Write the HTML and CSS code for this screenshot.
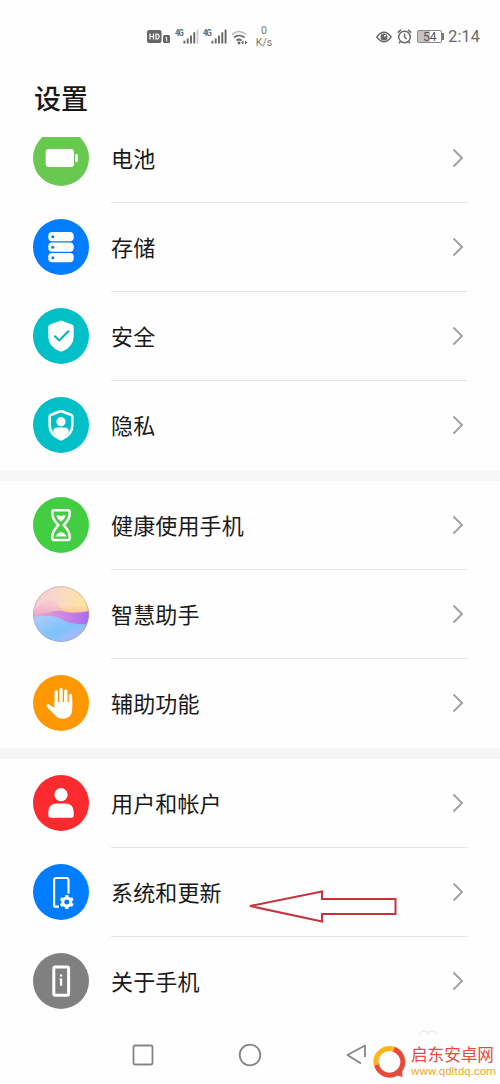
FILE: index.html
```html
<!DOCTYPE html>
<html lang="zh-CN">
<head>
<meta charset="utf-8">
<title>设置</title>
<link rel="stylesheet" href="styles.css">
</head>
<body>
<div class="phone">
  <header class="status">
    <div class="status-left">
      <svg width="24" height="16" viewBox="0 0 24 16"><rect x="0" y="1" width="14.500" height="13" rx="2" fill="#666"/><path d="M3 4.500v6M6.500 4.500v6M3 7.500h3.500M9 5v5h1q2 0 2-2.500t-2-2.500z" stroke="#fff" stroke-width="1.200" fill="none"/><rect x="16" y="6" width="7" height="8" rx="1.500" fill="#666"/><path d="M18.500 8.500h1.200v4" stroke="#fff" fill="none"/></svg>
      <span class="signal"><span class="net">4G</span><svg width="16" height="15" viewBox="0 0 17 15"><path d="M1.500 15v-3M5 15V9.500M8.500 15V6.500M12 15V3" stroke="#666" stroke-width="2"/><path d="M15.500 15V0" stroke="#ccc" stroke-width="2"/></svg></span>
      <span class="signal"><span class="net">4G</span><svg width="16" height="15" viewBox="0 0 17 15"><path d="M1.500 15v-3M5 15V9.500M8.500 15V6.500M12 15V3M15.500 15V0" stroke="#666" stroke-width="2"/></svg></span>
      <svg class="wifi" width="17" height="15" viewBox="0 0 17 15"><path d="M1 4.500Q8 -1.500 15 4.500" stroke="#bbb" stroke-width="1.600" fill="none"/><path d="M3 7.500q5-4 10.500 0M5.500 10.500q2.500-2 5 0" stroke="#666" stroke-width="1.700" fill="none"/><circle cx="8" cy="13" r="1.400" fill="#666"/><path d="M10 12.500l2.500-2v4zM16.500 12.500l-2.500-2v4z" fill="#666"/></svg>
      <span class="speed"><span>0</span><span>K/s</span></span>
    </div>
    <div class="status-right">
      <svg width="16" height="12" viewBox="0 0 16 12"><path d="M.8 6Q8-3.500 15.200 6 8 15.500.8 6z" fill="none" stroke="#666" stroke-width="1.300"/><circle cx="8" cy="6" r="3.500" fill="#666"/><circle cx="9" cy="4.800" r="1" fill="#fff"/></svg>
      <svg width="15" height="15" viewBox="0 0 15 15" fill="none" stroke="#666" stroke-width="1.400"><circle cx="7.500" cy="8" r="5.800"/><path d="M.8 3.600L4 .9M14.200 3.600L11 .9M7.500 4.500V8l2.200 2M3.500 12.500L2 14.300M11.500 12.500l1.500 1.800"/></svg>
      <span class="charge"><span class="charge-text">54</span></span>
      <span class="time">2:14</span>
    </div>
  </header>
  <h1 class="title">设置</h1>
  <main class="list">
    <section class="group group-first">
      <div class="row"><span class="icon green"><svg viewBox="0 0 56 56" fill="#fff"><rect x="12.700" y="19" width="28.300" height="18" rx="3"/><rect x="42.200" y="24" width="2.600" height="8" rx="1"/></svg></span><div class="cell"><span class="label">电池</span><svg class="chev" viewBox="0 0 12 20"><path d="M1.500 1.500L10 10l-8.500 8.500"/></svg></div></div>
      <div class="row"><span class="icon blue"><svg viewBox="0 0 56 56"><g fill="#fff"><rect x="15.300" y="13" width="25.400" height="9.300" rx="3.800"/><rect x="15.300" y="23.500" width="25.400" height="9.300" rx="3.800"/><rect x="15.300" y="34" width="25.400" height="9.300" rx="3.800"/></g><g fill="#007dff"><circle cx="19.800" cy="17.700" r="1.500"/><circle cx="19.800" cy="28.200" r="1.500"/><circle cx="19.800" cy="38.700" r="1.500"/></g></svg></span><div class="cell"><span class="label">存储</span><svg class="chev" viewBox="0 0 12 20"><path d="M1.500 1.500L10 10l-8.500 8.500"/></svg></div></div>
      <div class="row"><span class="icon teal"><svg viewBox="0 0 56 56"><path d="M26.500 13q1.500-.8 3 0L39 16.500q1.700.7 1.700 2.500V28.500q0 10-11.200 14.700-1.500.6-3 0Q15.200 38.500 15.200 28.500V19q0-1.800 1.700-2.500z" fill="#fff"/><path d="M21.300 27.700l5 4.700 9.500-9.600" fill="none" stroke="#00b4bc" stroke-width="2"/></svg></span><div class="cell"><span class="label">安全</span><svg class="chev" viewBox="0 0 12 20"><path d="M1.500 1.500L10 10l-8.500 8.500"/></svg></div></div>
      <div class="row"><span class="icon teal"><svg viewBox="0 0 56 56"><path d="M27.200 14.300q.8-.4 1.600 0L38.300 18q1 .4 1 1.600V28.500q0 9-10.300 13.500-1 .4-2 0Q16.700 37.500 16.700 28.500V19.600q0-1.200 1-1.600z" fill="none" stroke="#fff" stroke-width="2.600"/><circle cx="28" cy="24.700" r="4.600" fill="#fff"/><path d="M20.300 35.500V34.500q0-4 4-4h7.400q4 0 4 4v1q-2.500 3-7.700 6-5.200-3-7.700-6z" fill="#fff"/></svg></span><div class="cell"><span class="label">隐私</span><svg class="chev" viewBox="0 0 12 20"><path d="M1.500 1.500L10 10l-8.500 8.500"/></svg></div></div>
    </section>
    <section class="group">
      <div class="row"><span class="icon lime"><svg viewBox="0 0 56 56"><path d="M21.500 13.300h13q2.200 0 2.200 2v1.500q0 5-6 11.400 6 6.500 6 11.500v1.500q0 1.900-2.200 1.900h-13q-2.200 0-2.200-1.900v-1.500q0-5 6-11.500-6-6.400-6-11.400v-1.500q0-2 2.200-2z" fill="none" stroke="#fff" stroke-width="2.500"/><path d="M23.200 18.700q2.400-1 4.800.6 2.400-1.600 4.800-.6-.9 3-4.800 5.700-3.900-2.700-4.800-5.700zM22.300 39.500Q24.500 35.500 28 35.300q3.500.2 5.700 4.200z" fill="#fff"/></svg></span><div class="cell"><span class="label">健康使用手机</span><svg class="chev" viewBox="0 0 12 20"><path d="M1.500 1.500L10 10l-8.500 8.500"/></svg></div></div>
      <div class="row"><span class="icon"><svg viewBox="0 0 56 56"><defs><linearGradient id="sky" x1="0" y1="0" x2="1" y2="0"><stop offset="0" stop-color="#f6cbd8"/><stop offset=".5" stop-color="#f9d9c4"/><stop offset="1" stop-color="#ffe69c"/></linearGradient><linearGradient id="peach" x1="0" y1="0" x2="0" y2="1"><stop offset="0" stop-color="#ffeaa7"/><stop offset="1" stop-color="#f9b393"/></linearGradient><linearGradient id="violet"><stop offset="0" stop-color="#f0a8be"/><stop offset=".5" stop-color="#d18ae2"/><stop offset="1" stop-color="#a66cf0"/></linearGradient><linearGradient id="sea" x1="0" y1="0" x2="1" y2="1"><stop offset="0" stop-color="#b4cbf8"/><stop offset=".5" stop-color="#7fc3fc"/><stop offset="1" stop-color="#a4bbfb"/></linearGradient><linearGradient id="blush" x1="0" y1="0" x2="0" y2="1"><stop offset="0" stop-color="#f3b9cf" stop-opacity=".3"/><stop offset="1" stop-color="#ec9fc2"/></linearGradient></defs><g><path fill="url(#sky)" d="M0 0h56v56H0z"/><path d="M0 26Q10 12 20 15q8 5 14 10v8H0z" fill="url(#blush)"/><path d="M23 18q9 6 18 1 9-4 15 2v10H38Q32 25 23 18z" fill="url(#peach)"/><path d="M0 28q9 0 15-1 9-4 18-1 10 2 23-1v19q-16 0-24-4-12-7-32-5z" fill="url(#violet)"/><path d="M0 31q8-2 16-1 9 0 16 5 8 4 24 3v18H0z" fill="url(#sea)"/><path d="M27 56q4-14 29-17v17z" fill="#b6b5f8" opacity=".35"/></g><circle cx="28" cy="28" r="27.500" fill="none" stroke="#9c9baf" stroke-opacity=".65" stroke-width=".8"/></svg></span><div class="cell"><span class="label">智慧助手</span><svg class="chev" viewBox="0 0 12 20"><path d="M1.500 1.500L10 10l-8.500 8.500"/></svg></div></div>
      <div class="row"><span class="icon orange"><svg viewBox="0 0 56 56"><g stroke="#fff" stroke-width="3.400" stroke-linecap="round" fill="none"><path d="M23.200 31V17M28 31V14.500M32.800 31V16M37.500 31V20.500M22.500 37L15.200 30.800"/></g><path d="M21.500 27h17.700v7q0 9.700-9.200 9.700-5.500 0-8.500-4L15 33l2.500-2.500 4 2.500z" fill="#fff"/></svg></span><div class="cell"><span class="label">辅助功能</span><svg class="chev" viewBox="0 0 12 20"><path d="M1.500 1.500L10 10l-8.500 8.500"/></svg></div></div>
    </section>
    <section class="group">
      <div class="row"><span class="icon red"><svg viewBox="0 0 56 56" fill="#fff"><circle cx="28" cy="19.700" r="6.600"/><path d="M15.300 37q0-8.500 8.500-8.500h8.400q8.500 0 8.500 8.500v3.200q0 2.500-2.500 2.500H17.800q-2.500 0-2.500-2.500z"/></svg></span><div class="cell"><span class="label">用户和帐户</span><svg class="chev" viewBox="0 0 12 20"><path d="M1.500 1.500L10 10l-8.500 8.500"/></svg></div></div>
      <div class="row"><span class="icon blue"><svg viewBox="0 0 56 56" fill="none" stroke="#fff"><path d="M26 42.700h-3.500q-1.400 0-1.400-1.500V16q0-2 2-2h10.400q2 0 2 2v13.500" stroke-width="2.200"/><circle cx="33.800" cy="38" r="4" stroke-width="3"/><path d="M33.800 31v3M33.800 42v3M27.700 34.500l2.600 1.500M37.300 40l2.600 1.500M27.700 41.500l2.600-1.500M37.300 36l2.600-1.500" stroke-width="3.200"/></svg></span><div class="cell"><span class="label">系统和更新</span><svg class="chev" viewBox="0 0 12 20"><path d="M1.500 1.500L10 10l-8.500 8.500"/></svg><svg class="arrow" viewBox="0 0 152 36"><path d="M3 17L75 2.500V10h73.500v15H75v7.500z"/></svg></div></div>
      <div class="row"><span class="icon gray"><svg viewBox="0 0 56 56"><rect x="20.800" y="14" width="14.800" height="28.300" rx="1.500" fill="none" stroke="#fff" stroke-width="3"/><path d="M27 21.500h2.200v2H27zM26.500 25.500h2.700v7.300H27v-5.700h-.5z" fill="#fff"/></svg></span><div class="cell"><span class="label">关于手机</span><svg class="chev" viewBox="0 0 12 20"><path d="M1.500 1.500L10 10l-8.500 8.500"/></svg></div></div>
    </section>
  </main>
  <nav class="nav">
    <svg width="22" height="22" viewBox="0 0 22 22"><rect x="1.500" y="1.500" width="19" height="19" rx="1.500"/></svg>
    <svg width="24" height="24" viewBox="0 0 24 24"><circle cx="12" cy="12" r="10.300"/></svg>
    <svg width="22" height="24" viewBox="0 0 22 24"><path d="M16 20.500L2.500 12 20 2.500V14"/></svg>
  </nav>
  <div class="brand">
    <svg class="ghost" width="18" height="8" viewBox="0 0 18 8"><path d="M1 6q0-4 4-4t4 4q0-4 4-4t4 4" fill="none" stroke="#ececec" stroke-width="1.300"/></svg>
    <svg width="33" height="34" viewBox="0 0 33 34"><g fill="none" stroke-width="5"><path d="M20 4A13.300 13.300 0 1 1 3.300 18" stroke="#e84a3a"/><path d="M3.400 20A13.300 13.300 0 0 1 21 4.400" stroke="#fcb51b"/></g><path d="M21 29.500l8-6 .5 8.500z" fill="#e84a3a"/></svg>
    <div class="brand-text"><span class="brand-name">启东安卓网</span><span class="brand-url">www.qdltdq.com</span></div>
  </div>
</div>
</body>
</html>
```
FILE: styles.css
```css
* { box-sizing: border-box; }
body { margin: 0; background: #fefefe; color: #191919; font-family: "Noto Sans CJK SC", sans-serif; }
svg { display: block; flex: none; }
.phone { position: relative; width: 500px; height: 1084px; overflow: hidden; display: flex; flex-direction: column; }
.status { height: 73px; padding: 0 20px 0 147px; display: flex; align-items: center; justify-content: space-between; color: #666; font-family: Roboto, sans-serif; }
.status-left { display: flex; align-items: center; gap: 4px; }
.signal { display: flex; align-items: center; gap: 0; }
.net { font-size: 9px; font-weight: 700; line-height: 9px; width: 8px; letter-spacing: -1px; align-self: flex-start; transform: scaleX(.85); transform-origin: left; }
.wifi { margin-top: 2px; }
.speed { display: flex; flex-direction: column; align-items: center; width: 18px; margin-left: 3px; font-size: 10.5px; line-height: 12px; color: #777; }
.status-right { display: flex; align-items: center; gap: 5px; }
.charge { position: relative; width: 25px; height: 13px; border: 1px solid #888; border-radius: 2px; background: linear-gradient(90deg, #c4c4c4 54%, #fff 54%); font-size: 12px; line-height: 12px; text-align: center; }
.charge::after { content: ""; position: absolute; right: -3px; top: 2px; width: 2px; height: 7px; background: #777; }
.charge-text { color: #555; }
.time { font-size: 16px; margin-left: 1px; letter-spacing: .2px; }
.title { height: 64px; margin: 0; padding-left: 34px; font-size: 27px; line-height: 49px; font-weight: 500; }
.list { flex: none; height: 889px; overflow: hidden; }
.group { border-top: 11px solid #f6f6f6; }
.group-first { border-top: 0; margin-top: -23px; }
.row { height: 89px; padding: 0 33px; display: flex; align-items: center; gap: 22px; }
.icon { flex: none; width: 56px; height: 56px; margin-bottom: 1px; border-radius: 50%; overflow: hidden; }
.icon svg { width: 56px; height: 56px; }
.green { background: #69c84f; }
.blue { background: #007dff; }
.teal { background: #00bfc7; }
.lime { background: #43cd43; }
.orange { background: #ff9800; }
.red { background: #fb2a2e; }
.gray { background: #808080; }
.cell { position: relative; flex: 1; height: 89px; border-bottom: 1px solid #e6e6e6; display: flex; align-items: center; justify-content: space-between; padding-right: 3px; font-size: 22px; letter-spacing: .15px; }
.row:last-child .cell { border-bottom-color: transparent; }
.label { padding-bottom: 2px; }
.chev { width: 12px; height: 20px; fill: none; stroke: #a0a0a0; stroke-width: 1.9; }
.arrow { position: absolute; left: 136px; top: 41px; width: 152px; height: 36px; fill: none; stroke: #c5343d; stroke-width: 2; }
.nav { height: 58px; padding: 0 133px 0 132px; display: flex; align-items: center; justify-content: space-between; }
.nav svg { fill: none; stroke: #858585; stroke-width: 1.8; stroke-linejoin: round; }
.brand { position: absolute; left: 373px; top: 1045px; display: flex; align-items: center; gap: 5px; }
.ghost { position: absolute; left: 46px; top: -16px; }
.brand-text { display: flex; flex-direction: column; white-space: nowrap; }
.brand-name { font-size: 16.6px; line-height: 19px; color: #e84a3a; }
.brand-url { font-family: Roboto, sans-serif; font-size: 11.3px; line-height: 15px; color: #efaa24; }
```
